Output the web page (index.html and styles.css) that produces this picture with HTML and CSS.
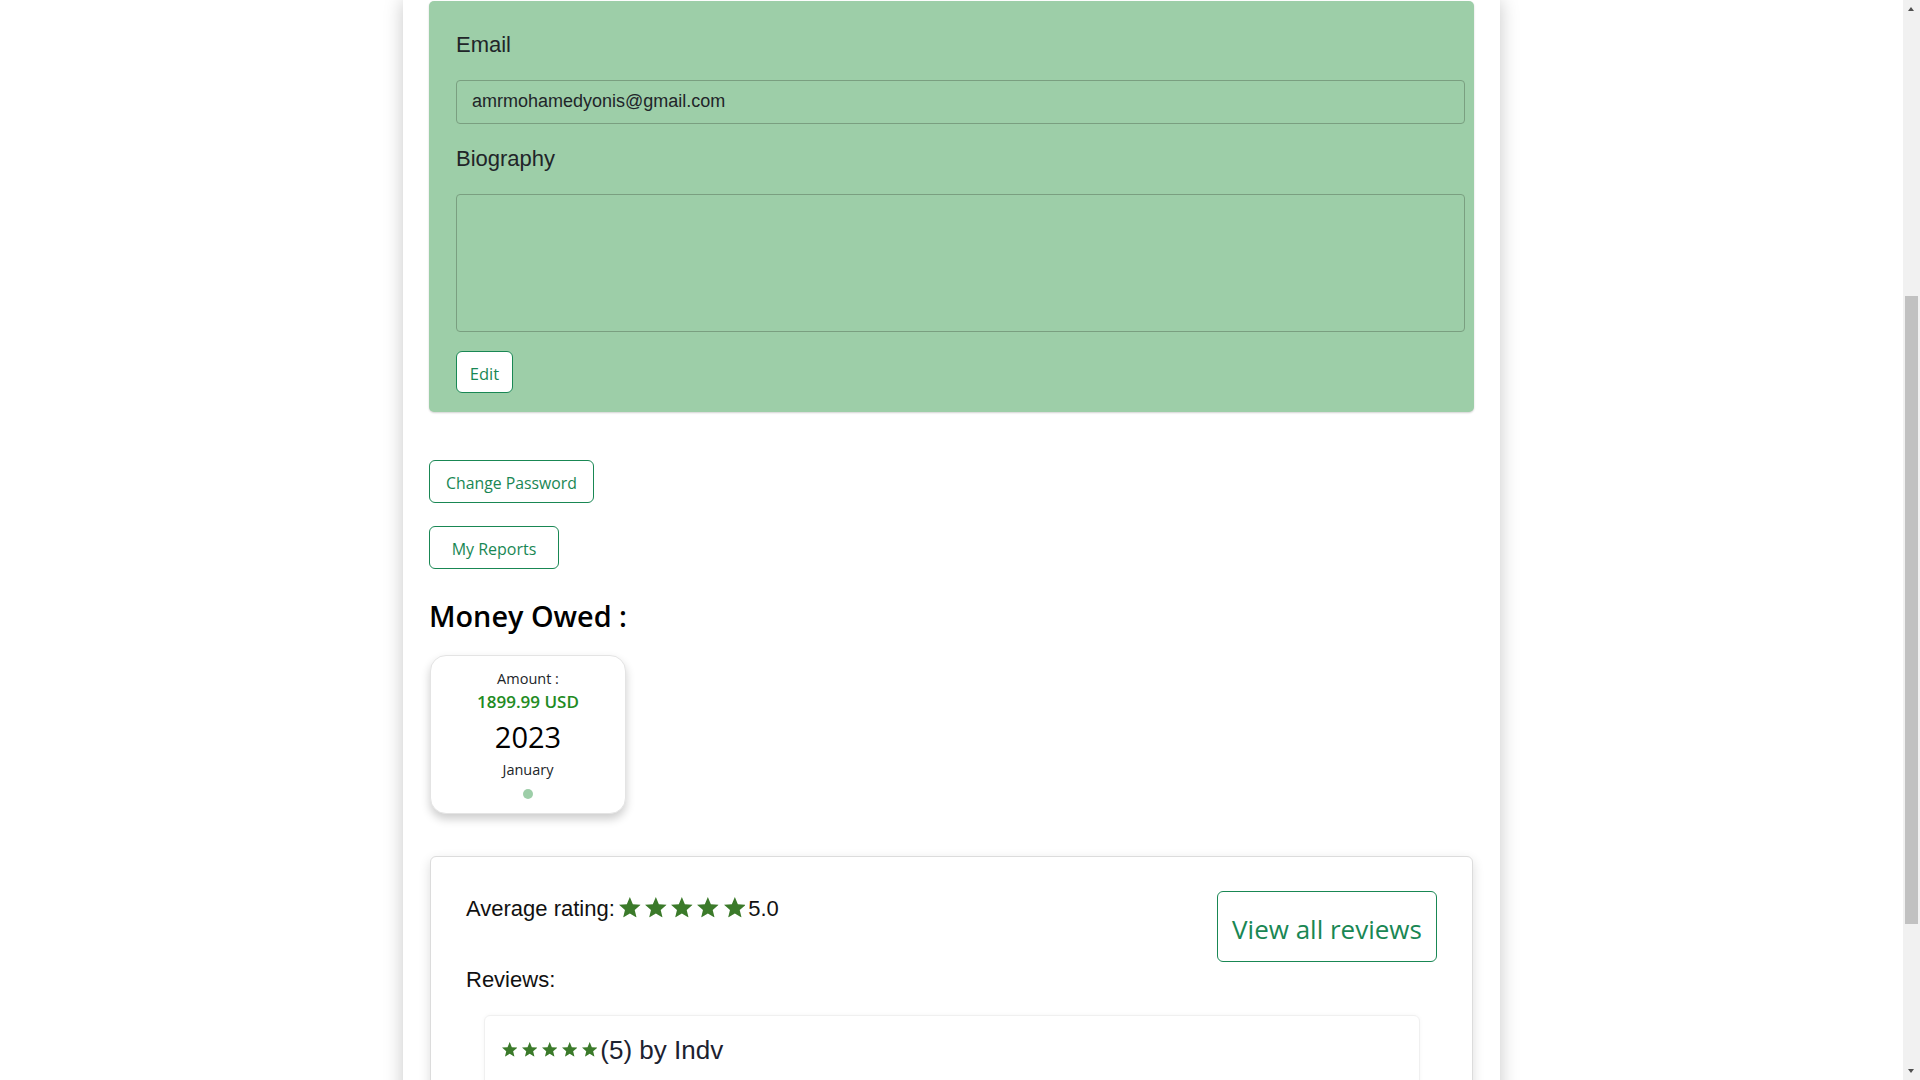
FILE: index.html
```html
<!DOCTYPE html>
<html lang="en">
<head>
<meta charset="utf-8">
<title>Profile</title>
<link rel="stylesheet" href="styles.css">
</head>
<body>
<svg class="defs" width="0" height="0" aria-hidden="true">
  <symbol id="star" viewBox="0 0 19.02 18.09">
    <polygon points="9.51,0 12.16,6.36 19.02,6.91 13.79,11.39 15.39,18.09 9.51,14.5 3.63,18.09 5.23,11.39 0,6.91 6.86,6.36"/>
  </symbol>
</svg>
<div class="viewport">
  <main class="page">
    <section class="profile-card">
      <div class="field-label">Email</div>
      <div class="field-input">amrmohamedyonis@gmail.com</div>
      <div class="field-label">Biography</div>
      <div class="field-textarea"></div>
      <button class="btn btn-edit">Edit</button>
    </section>

    <button class="btn btn-change">Change Password</button>
    <button class="btn btn-reports">My Reports</button>

    <h2 class="section-title">Money Owed :</h2>
    <div class="owed-card">
      <div class="owed-label">Amount :</div>
      <div class="owed-amount">1899.99 USD</div>
      <div class="owed-year">2023</div>
      <div class="owed-month">January</div>
      <span class="owed-dot"></span>
    </div>

    <section class="reviews-card">
      <div class="reviews-head">
        <div class="avg">Average rating:<span class="stars stars-lg"><svg><use href="#star"/></svg><svg><use href="#star"/></svg><svg><use href="#star"/></svg><svg><use href="#star"/></svg><svg><use href="#star"/></svg></span>5.0</div>
        <button class="btn btn-view">View all reviews</button>
      </div>
      <div class="reviews-label">Reviews:</div>
      <div class="review-item">
        <div class="review-line"><span class="stars stars-sm"><svg><use href="#star"/></svg><svg><use href="#star"/></svg><svg><use href="#star"/></svg><svg><use href="#star"/></svg><svg><use href="#star"/></svg></span>(5) by Indv</div>
      </div>
    </section>
  </main>
</div>
<div class="scrollbar">
  <div class="sb-arrow sb-up"></div>
  <div class="sb-thumb"></div>
  <div class="sb-fill"></div>
  <div class="sb-arrow sb-down"></div>
</div>
</body>
</html>
```

FILE: styles.css
```css
* { box-sizing: border-box; }
html, body { margin: 0; height: 100%; }
body {
  display: flex;
  background: #fff;
  overflow: hidden;
  font-family: "Open Sans", "Noto Sans", sans-serif;
  color: #212529;
}
.defs { position: absolute; width: 0; height: 0; overflow: hidden; }

.viewport { flex: 1; height: 1080px; overflow: hidden; }

.page {
  width: 1097px;
  margin: 0 auto;
  min-height: 1080px;
  background: #fff;
  box-shadow: 0 0 18px rgba(0, 0, 0, 0.22);
  padding: 1px 26px 0;
}

/* profile form card */
.profile-card {
  background: #9dcea8;
  border-radius: 5px;
  padding: 31px 9px 19px 27px;
  box-shadow: 0 1px 2px rgba(0, 0, 0, 0.18);
}
.field-label {
  font: 22px/26px "Liberation Sans", Arial, sans-serif;
  color: #212529;
  margin: 0 0 22px;
}
.field-input {
  height: 44px;
  border: 1px solid #7a9f80;
  border-radius: 4px;
  padding: 0 15px;
  font: 18px/41px "Liberation Sans", Arial, sans-serif;
  color: #212529;
  margin-bottom: 22px;
}
.field-textarea {
  height: 138px;
  border: 1px solid #7a9f80;
  border-radius: 4px;
  margin-bottom: 19px;
}

/* buttons */
.btn {
  display: block;
  background: #fff;
  border: 1px solid #198754;
  color: #198754;
  border-radius: 6px;
  font-family: "Open Sans", "Noto Sans", sans-serif;
  padding: 0;
  text-align: center;
  cursor: pointer;
}
.btn-edit { width: 57px; height: 42px; font-size: 16.5px; line-height: 40px; padding-top: 2px; }
.btn-change { width: 165px; height: 43px; font-size: 15.8px; line-height: 41px; padding-top: 2px; margin-top: 48px; }
.btn-reports { width: 130px; height: 43px; font-size: 16px; line-height: 41px; padding-top: 2px; margin-top: 23px; }

/* money owed */
.section-title {
  margin: 30px 0 0;
  font: 600 28.8px/34px "Open Sans", "Noto Sans", sans-serif;
  color: #000;
}
.owed-card {
  width: 196px;
  margin: 22px 0 0 1px;
  border: 1px solid #e4e4e4;
  border-radius: 16px;
  background: #fff;
  box-shadow: 0 5px 10px rgba(0, 0, 0, 0.2);
  padding: 13px 0 14px;
  display: flex;
  flex-direction: column;
  align-items: center;
}
.owed-label { font-size: 14.5px; line-height: 20px; color: #212529; }
.owed-amount { font-size: 17px; line-height: 26px; font-weight: 600; color: #228b22; }
.owed-year { font-size: 29px; line-height: 44px; color: #000; }
.owed-month { font-size: 14.5px; line-height: 22px; color: #212529; }
.owed-dot {
  width: 10px; height: 10px;
  border-radius: 50%;
  background: #9dcea8;
  margin-top: 8px;
}

/* reviews */
.reviews-card {
  margin: 42px 1px 0;
  border: 1px solid #dcdcdc;
  border-radius: 6px;
  background: #fff;
  box-shadow: 0 4px 12px rgba(0, 0, 0, 0.14);
  padding: 34px 35px 0 35px;
}
.reviews-head {
  display: flex;
  justify-content: space-between;
  align-items: flex-start;
}
.avg {
  font: 22px/36px "Liberation Sans", Arial, sans-serif;
  color: #111;
}
.btn-view { width: 220px; height: 71px; font-size: 26px; line-height: 69px; padding-top: 3px; }

.stars { display: inline-flex; fill: #3b7a2a; }
.stars-lg { gap: 4.5px; margin: 0 3px 0 4px; vertical-align: -1.5px; }
.stars-lg svg { width: 21.7px; height: 20.6px; }
.stars-sm { gap: 4.6px; margin-right: 3px; vertical-align: 2px; }
.stars-sm svg { width: 15.4px; height: 14.7px; }

.reviews-label {
  font: 22px/36px "Liberation Sans", Arial, sans-serif;
  color: #111;
}
.review-item {
  margin: 17px 17px 0 18px;
  border: 1px solid #f0f0f0;
  border-radius: 6px;
  box-shadow: 0 0 4px rgba(0, 0, 0, 0.04);
  padding: 15px 17px 0;
  min-height: 140px;
}
.review-line {
  font: 26px/39px "Liberation Sans", Arial, sans-serif;
  color: #1c2230;
}

/* scrollbar */
.scrollbar {
  width: 17px;
  height: 1080px;
  background: #f1f1f1;
  display: flex;
  flex-direction: column;
  align-items: center;
}
.sb-arrow { width: 17px; height: 17px; position: relative; }
.sb-up::after, .sb-down::after {
  content: "";
  position: absolute;
  left: 5px;
  width: 0; height: 0;
  border-left: 3.5px solid transparent;
  border-right: 3.5px solid transparent;
}
.sb-up::after { top: 7px; border-bottom: 4px solid #505050; }
.sb-down::after { top: 6px; border-top: 4px solid #505050; }
.sb-thumb {
  width: 13px;
  height: 628px;
  margin-top: 279px;
  background: #c1c1c1;
}
.sb-fill { flex: 1; }
```
